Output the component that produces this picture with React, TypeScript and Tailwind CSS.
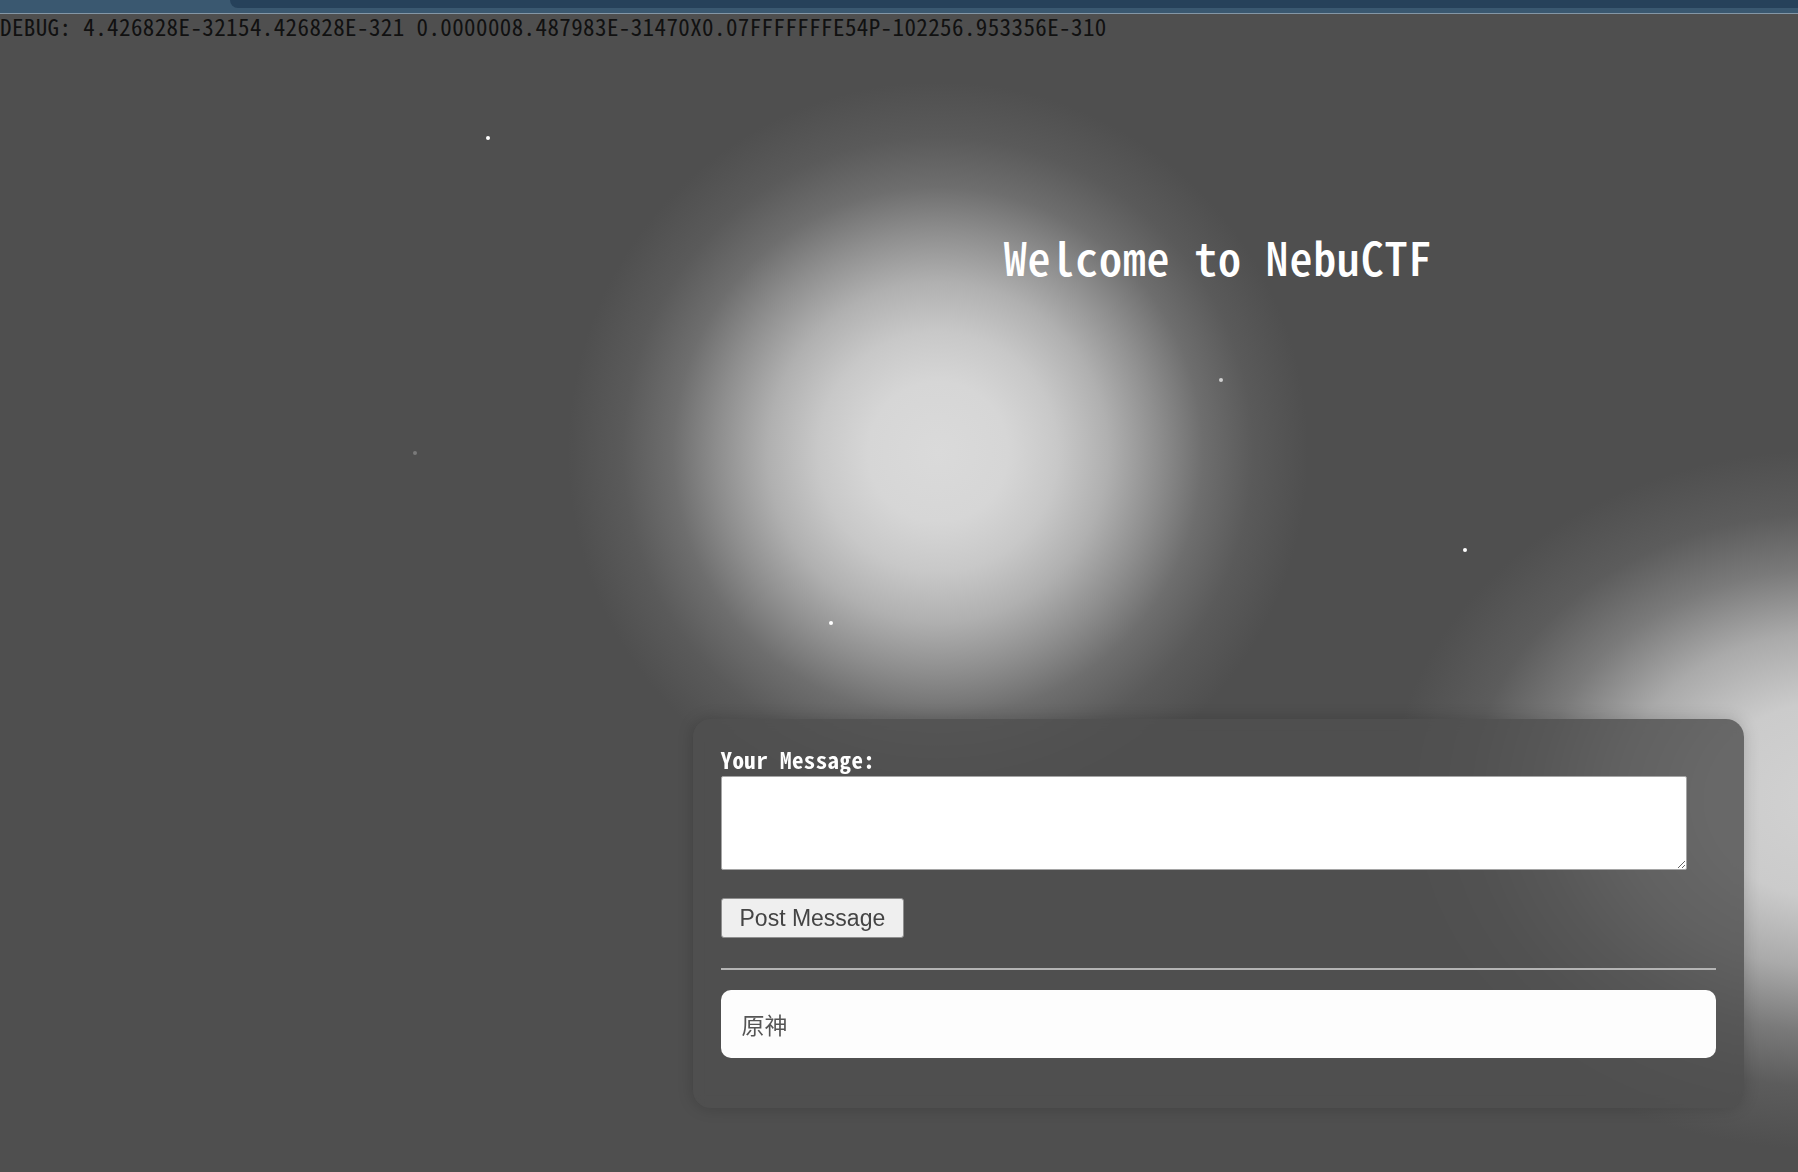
import React from 'react';

const debugLine =
  'DEBUG: 4.426828E-32154.426828E-321 0.0000008.487983E-31470X0.07FFFFFFFE54P-102256.953356E-310';

const stars = [
  { x: 486, y: 136, c: 'bg-white' },
  { x: 1219, y: 378, c: 'bg-[#d0d0d0]' },
  { x: 413, y: 451, c: 'bg-[#7a7a7a]' },
  { x: 1463, y: 548, c: 'bg-white' },
  { x: 829, y: 621, c: 'bg-white' },
];

export default function App() {
  return (
    <div className="relative min-h-screen w-full overflow-hidden bg-[#4f4f4f] bg-[image:radial-gradient(circle_370px_at_938px_452px,rgba(218,218,218,1)_0px,rgba(214,214,214,1)_70px,rgba(200,200,200,1)_120px,rgba(176,176,176,1)_170px,rgba(142,142,142,1)_220px,rgba(110,110,110,1)_265px,rgba(90,90,90,1)_315px,rgba(79,79,79,0)_370px),radial-gradient(ellipse_440px_350px_at_1830px_800px,rgba(210,210,210,1)_0%,rgba(203,203,203,1)_28%,rgba(170,170,170,1)_48%,rgba(122,122,122,1)_66%,rgba(92,92,92,1)_82%,rgba(79,79,79,0)_100%)] font-['Noto_Sans_CJK_SC',monospace] [font-feature-settings:'hwid']">
      {/* stars */}
      {stars.map((s, i) => (
        <span
          key={i}
          className={`absolute h-[4px] w-[4px] rounded-full ${s.c}`}
          style={{ left: s.x, top: s.y }}
        />
      ))}

      {/* window strip */}
      <div className="flex h-[14px] border-b border-[#8497a6] bg-[#3a5870]">
        <div className="w-[230px]" />
        <div className="h-[8px] flex-1 rounded-bl-[8px] bg-[#26415a]" />
      </div>

      <div className="h-[24px] whitespace-nowrap text-[23px] leading-[24px] tracking-[0.4px] text-[#111]">
        {debugLine}
      </div>

      <div className="flex">
        <div className="w-[638px] shrink-0" />
        <div className="flex flex-1 flex-col items-center">
          <h1 className="mt-[190px] h-[56px] text-[46px] font-medium leading-[56px] tracking-[0.8px] text-white">
            Welcome to NebuCTF
          </h1>

          <div className="mt-[435px] w-[1051px] rounded-[18px] bg-[rgba(79,79,79,0.8)] px-[28px] pb-[50px] pt-[28px] shadow-[0_0_16px_rgba(0,0,0,0.18)] backdrop-blur-[6px]">
            <label className="block h-[24px] text-[23px] font-bold leading-[24px] tracking-[0.4px] text-white">
              Your Message:
            </label>
            <textarea className="mt-[5px] block h-[94px] w-[966px] rounded-[2px] border border-[#a5a5a5] bg-white" />
            <button className="mt-[28px] block h-[40px] rounded-[3px] border border-[#8f8f8f] bg-[#efefef] px-[18px] font-['Liberation_Sans',Arial,sans-serif] text-[23px] text-[#444] [font-feature-settings:normal]">
              Post Message
            </button>
            <div className="mt-[30px] h-[2px] bg-[#b4b4b4]" />
            <div className="mt-[20px] flex h-[68px] items-center rounded-[10px] bg-[#fdfdfd] px-[21px] text-[23px] text-[#555] [font-feature-settings:normal]">
              原神
            </div>
          </div>
        </div>
      </div>
    </div>
  );
}
